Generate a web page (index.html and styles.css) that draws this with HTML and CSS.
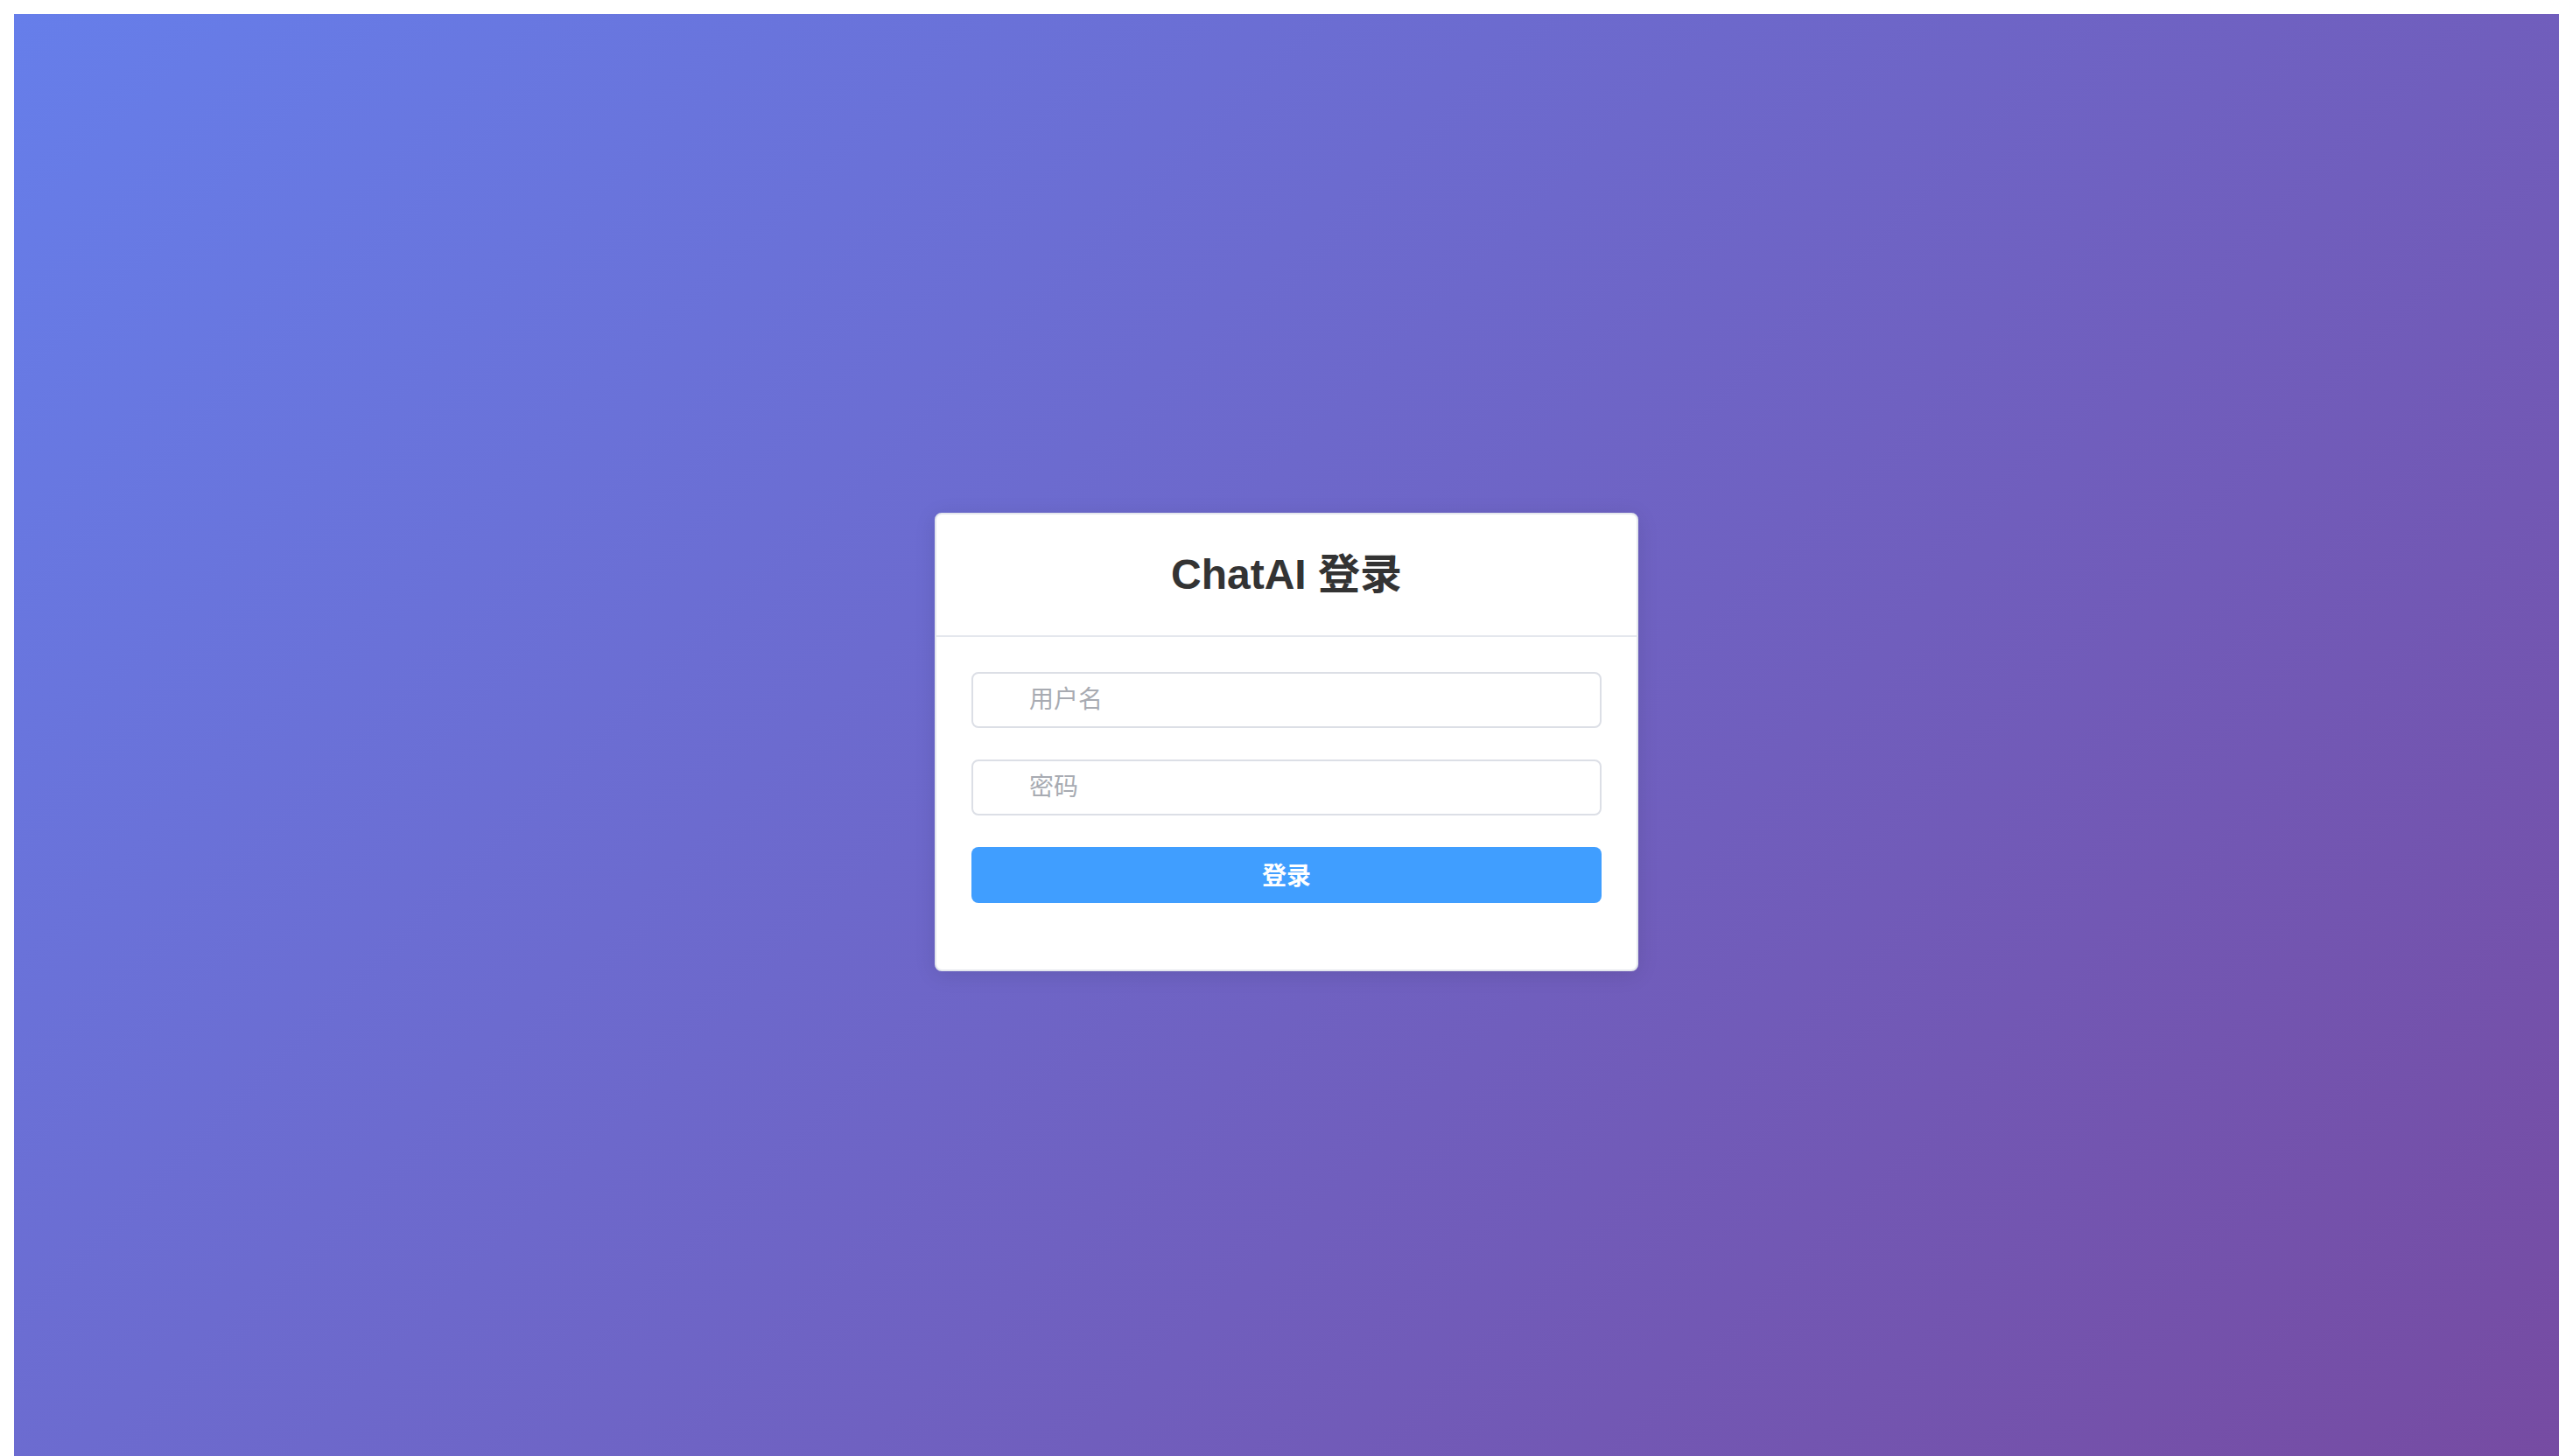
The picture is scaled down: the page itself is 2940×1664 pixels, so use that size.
FILE: index.html
```html
<!DOCTYPE html>
<html lang="zh-CN">
<head>
<meta charset="utf-8">
<title>ChatAI 登录</title>
<link rel="stylesheet" href="styles.css">
</head>
<body>
<div class="login-page">
  <div class="login-card">
    <div class="card-header">
      <h2 class="card-title">ChatAI 登录</h2>
    </div>
    <div class="card-body">
      <form class="login-form">
        <div class="form-item">
          <div class="input-wrap">
            <span class="input-prefix"></span>
            <input class="input" type="text" placeholder="用户名">
          </div>
        </div>
        <div class="form-item">
          <div class="input-wrap">
            <span class="input-prefix"></span>
            <input class="input" type="password" placeholder="密码">
          </div>
        </div>
        <div class="form-item">
          <button class="login-button" type="button">登录</button>
        </div>
      </form>
    </div>
  </div>
</div>
</body>
</html>
```
FILE: styles.css
```css
html {
  overflow: hidden;
}

body {
  margin: 16px;
  font-family: "Liberation Sans", "Noto Sans CJK SC", sans-serif;
}

.login-page {
  height: 100vh;
  display: flex;
  align-items: center;
  justify-content: center;
  background: linear-gradient(135deg, #667eea 0%, #764ba2 100%);
}

.login-card {
  width: 800px;
  background: #ffffff;
  border: 2px solid #e4e7ed;
  border-radius: 8px;
  box-shadow: 0 4px 24px rgba(0, 0, 0, 0.1);
  overflow: hidden;
}

.card-header {
  padding: 36px 40px;
  border-bottom: 2px solid #e4e7ed;
}

.card-title {
  margin: 0;
  text-align: center;
  font-size: 48px;
  line-height: 66px;
  font-weight: 700;
  color: #333333;
}

.card-body {
  padding: 40px;
}

.login-form {
  display: flex;
  flex-direction: column;
}

.form-item {
  margin-bottom: 36px;
}

.input-wrap {
  display: flex;
  align-items: center;
  height: 60px;
  padding: 0 22px;
  border: 2px solid #dcdfe6;
  border-radius: 8px;
  background: #ffffff;
}

.input-prefix {
  width: 28px;
  margin-right: 14px;
  flex: none;
}

.input {
  flex: 1;
  border: none;
  outline: none;
  padding: 0;
  height: 60px;
  font-family: "Liberation Sans", "Noto Sans CJK SC", sans-serif;
  font-size: 28px;
  color: #606266;
  background: transparent;
}

.input::placeholder {
  color: #a8abb2;
}

.login-button {
  display: block;
  width: 100%;
  height: 64px;
  padding: 0 0 2px;
  border: none;
  border-radius: 8px;
  background: #409eff;
  color: #ffffff;
  font-family: "Liberation Sans", "Noto Sans CJK SC", sans-serif;
  font-size: 28px;
  font-weight: 700;
  cursor: pointer;
}
```
